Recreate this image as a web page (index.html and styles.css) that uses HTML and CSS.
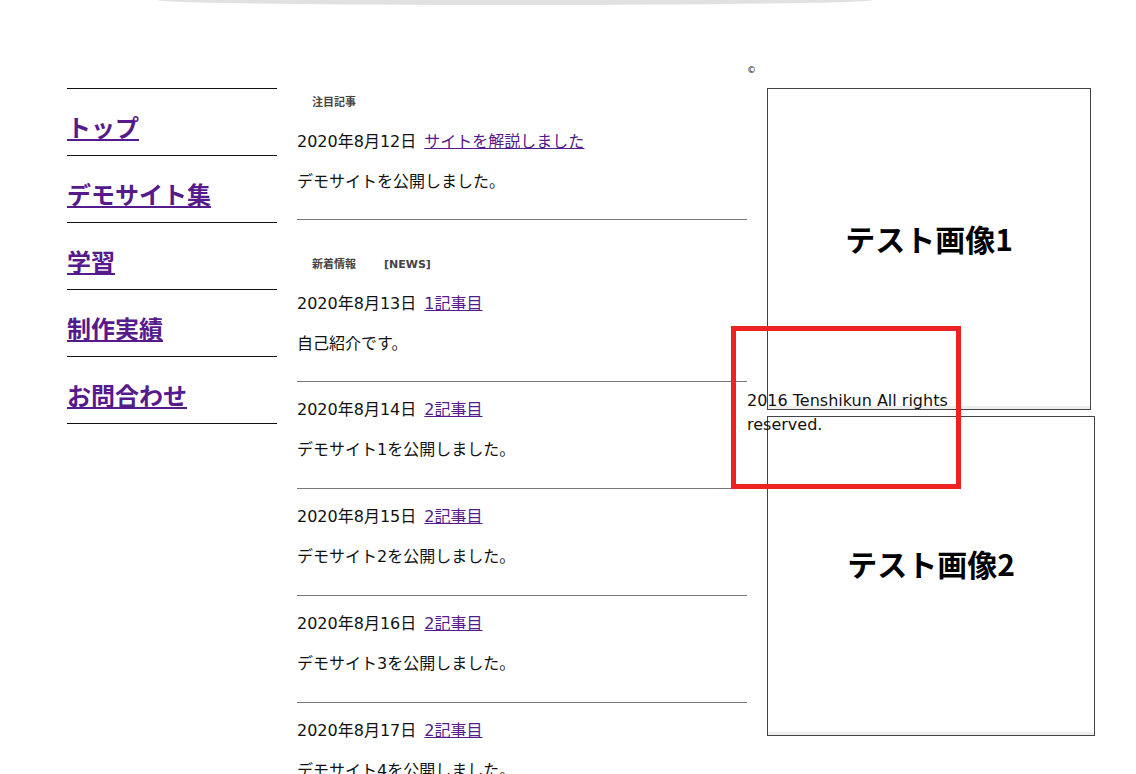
FILE: index.html
```html
<!DOCTYPE html>
<html lang="ja">
<head>
  <meta charset="UTF-8">
  <meta name="viewport" content="width=device-width, initial-scale=1.0">
  <title>Tenshikun</title>
  <link rel="stylesheet" href="styles.css">
</head>
<body>
  <div class="top-shade"></div>

  <div class="page">
    <nav class="nav">
      <ul>
        <li><a href="#">トップ</a></li>
        <li><a href="#">デモサイト集</a></li>
        <li><a href="#">学習</a></li>
        <li><a href="#">制作実績</a></li>
        <li><a href="#">お問合わせ</a></li>
      </ul>
    </nav>

    <main class="content">
      <section class="feature">
        <h2 class="label">注目記事</h2>
        <article class="post">
          <p class="post-date">2020年8月12日 <a href="#">サイトを解説しました</a></p>
          <p class="post-text">デモサイトを公開しました。</p>
        </article>
      </section>

      <section class="news">
        <h2 class="label">新着情報<span class="label-en">[NEWS]</span></h2>
        <article class="post">
          <p class="post-date">2020年8月13日 <a href="#">1記事目</a></p>
          <p class="post-text">自己紹介です。</p>
        </article>
        <article class="post">
          <p class="post-date">2020年8月14日 <a href="#">2記事目</a></p>
          <p class="post-text">デモサイト1を公開しました。</p>
        </article>
        <article class="post">
          <p class="post-date">2020年8月15日 <a href="#">2記事目</a></p>
          <p class="post-text">デモサイト2を公開しました。</p>
        </article>
        <article class="post">
          <p class="post-date">2020年8月16日 <a href="#">2記事目</a></p>
          <p class="post-text">デモサイト3を公開しました。</p>
        </article>
        <article class="post">
          <p class="post-date">2020年8月17日 <a href="#">2記事目</a></p>
          <p class="post-text">デモサイト4を公開しました。</p>
        </article>
      </section>
    </main>

    <aside class="side">
      <div class="copy-mark">©</div>
      <div class="figure figure-1">テスト画像1</div>
      <div class="figure figure-2">テスト画像2</div>
      <p class="copyright">2016 Tenshikun All rights reserved.</p>
      <div class="mark-frame"></div>
    </aside>
  </div>
</body>
</html>
```

FILE: styles.css
```css
body {
  margin: 0;
  font-family: "DejaVu Sans", "Noto Sans CJK JP", sans-serif;
  color: #111;
  background: #fff;
  overflow: hidden;
}
a {
  color: #551a8b;
}

/* header shadow peeking in at the top */
.top-shade {
  width: 716px;
  height: 10px;
  margin: -5px 0 0 157px;
  background: #e1e1e1;
  border-radius: 50%;
}

.page {
  display: flex;
  align-items: flex-start;
  padding: 57px 0 0 67px;
}

/* left navigation */
.nav {
  width: 210px;
  margin-top: 26px;
}
.nav ul {
  list-style: none;
  margin: 0;
  padding: 0;
  border-bottom: 1px solid #111;
}
.nav li {
  height: 24px;
  border-top: 1px solid #111;
  padding: 26px 0 16px;
  font-size: 24px;
  line-height: 24px;
}
.nav a {
  font-family: "Noto Sans CJK JP", sans-serif;
  font-weight: 700;
}

/* articles */
.content {
  width: 450px;
  margin-left: 20px;
  padding-top: 27px;
}
.label {
  margin: 6px 0 19px 15px;
  font-size: 11px;
  line-height: 16px;
  font-weight: 700;
  color: #444;
}
.news .label {
  margin-top: 37px;
}
.label-en {
  margin-left: 28px;
}
.post {
  padding: 16px 0 26px;
  border-bottom: 1px solid #777;
}
.feature .post,
.news .post:first-of-type {
  padding-top: 0;
  padding-bottom: 25px;
}
.post p {
  height: 24px;
  margin: 0;
  font-size: 16px;
  line-height: 24px;
}
.post .post-date {
  margin-bottom: 16px;
}
.post-date a {
  margin-left: 3px;
}

/* right column */
.side {
  position: relative;
  width: 360px;
}
.copy-mark {
  font-size: 9px;
  line-height: 16px;
  margin-bottom: 10px;
}
.figure {
  box-sizing: border-box;
  display: flex;
  align-items: center;
  justify-content: center;
  margin-left: 20px;
  padding-bottom: 22px;
  border: 1px solid #444;
  box-shadow: inset 0 -3px 0 #eee;
  font-family: "Noto Sans CJK JP", sans-serif;
  font-size: 30px;
  font-weight: 700;
  color: #000;
}
.figure-1 {
  width: 324px;
  height: 322px;
}
.figure-2 {
  width: 328px;
  height: 320px;
  margin-top: 6px;
  padding-bottom: 26px;
}
.copyright {
  position: absolute;
  top: 327px;
  left: 0;
  width: 215px;
  margin: 0;
  font-size: 16px;
  line-height: 24px;
}
.mark-frame {
  position: absolute;
  top: 264px;
  left: -16px;
  width: 230px;
  height: 163px;
  box-sizing: border-box;
  border: 5px solid #ee2222;
}
```
